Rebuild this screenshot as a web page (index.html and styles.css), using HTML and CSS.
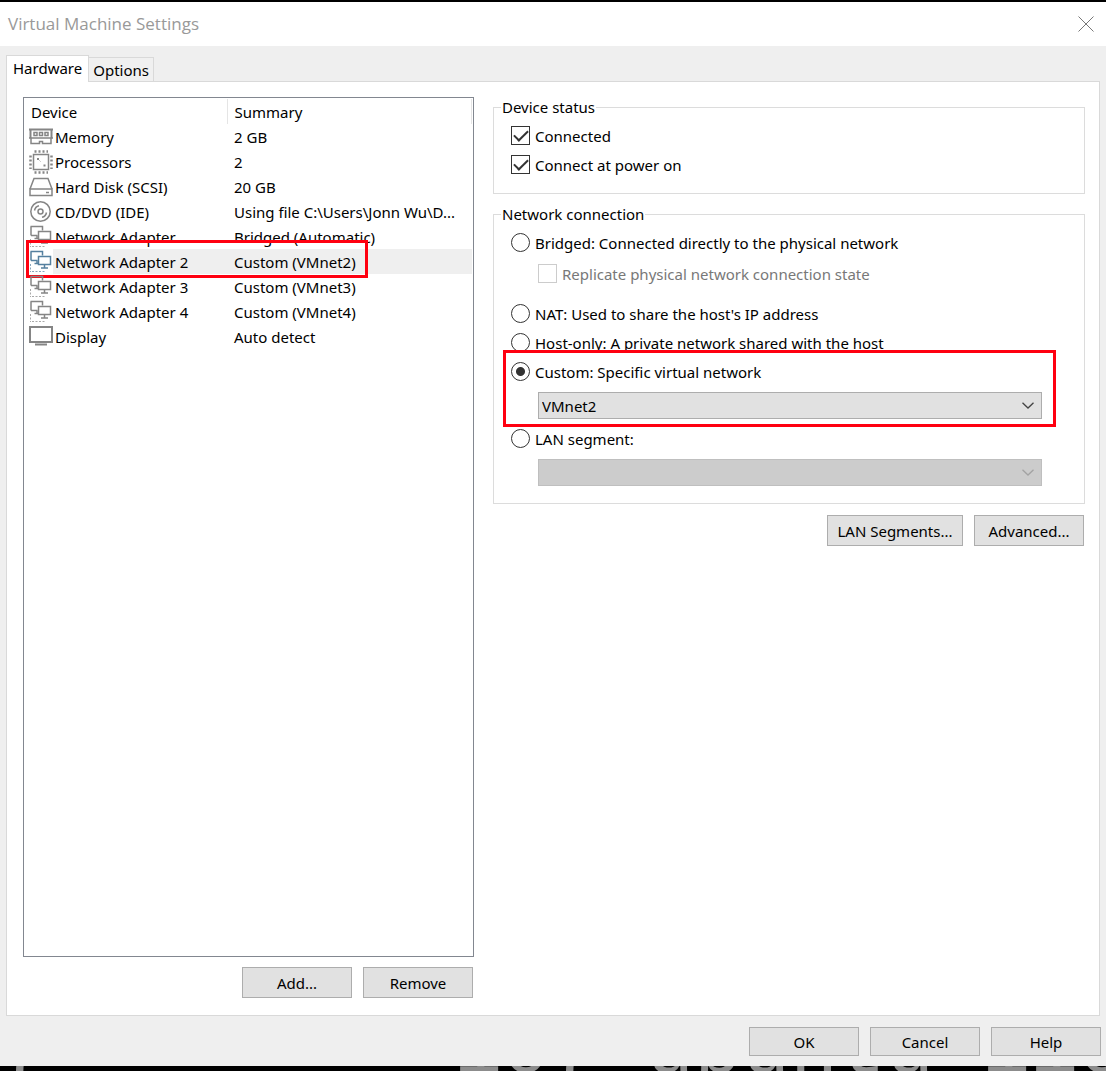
FILE: index.html
```html
<!DOCTYPE html>
<html lang="en">
<head>
<meta charset="utf-8">
<title>Virtual Machine Settings</title>
<link rel="stylesheet" href="styles.css">
</head>
<body>
<svg class="defs" aria-hidden="true">
  <symbol id="i-net" viewBox="0 0 24 24">
    <g fill="none" stroke="currentColor">
      <path d="M8.500 10.500H2M1.500 1.500H13.500V5.500M2 1.500V10.500" stroke-width="1.500"/>
      <path d="M5.500 13.500H9.500M8 10.500V13.500" stroke-width="1.500"/>
      <rect x="9.500" y="6.500" width="12" height="8" stroke-width="1.500" fill="none"/>
      <path d="M15.500 15V17.500M12 18H19" stroke-width="1.500"/>
      <path d="M1.500 14V22M3 21.500H16" stroke-dasharray="2 1.500" opacity=".7"/>
    </g>
  </symbol>
</svg>
<div class="dialog">
  <header class="titlebar">
    <h1>Virtual Machine Settings</h1>
    <button class="close" type="button" aria-label="Close"><svg width="16" height="16" viewBox="0 0 16 16"><path d="M.5.5l15 15M15.500.5l-15 15" stroke="#777" fill="none"/></svg></button>
  </header>
  <nav class="tabs">
    <button type="button" class="tab active">Hardware</button>
    <button type="button" class="tab">Options</button>
  </nav>
  <main class="panel">
    <section class="devices">
      <div class="list">
        <table>
          <thead><tr><th>Device</th><th>Summary</th></tr></thead>
          <tbody>
            <tr><td><span class="dev"><svg class="icon" viewBox="0 0 24 24"><g fill="none" stroke="currentColor"><path d="M0 4.500H24M1.500 4V13M22.500 4V13" stroke-width="2"/><path d="M0 13H24" stroke-width="1.500"/><path d="M2 13V18.500H10.500V16.500H13.500V18.500H22V13" stroke-width="1.500"/><path d="M5 7.500h3v3H5zM10.500 7.500h3v3h-3zM16 7.500h3v3h-3z" stroke-width="1.500"/></g></svg>Memory</span></td><td>2 GB</td></tr>
            <tr><td><span class="dev"><svg class="icon" viewBox="0 0 24 24"><g fill="none" stroke="currentColor"><rect x="4.500" y="4.500" width="15" height="15" stroke-width="1.500"/><path d="M5.500 1.500H19M5.500 22.500H19M1.500 5.500V19M22.500 5.500V19" stroke-width="2.500" stroke-dasharray="2 2"/><path d="M8 8h2v2H8zM14.500 14.500h2v2h-2z" fill="currentColor" stroke="none"/><path d="M10 10l2 2" opacity=".4"/></g></svg>Processors</span></td><td>2</td></tr>
            <tr><td><span class="dev"><svg class="icon" viewBox="0 0 24 24"><g fill="none" stroke="currentColor" stroke-width="1.500"><path d="M1 14L5 3.500H19L23 14"/><rect x="1" y="14" width="22" height="6.500"/><path d="M17 17.500h3"/></g></svg>Hard Disk (SCSI)</span></td><td>20 GB</td></tr>
            <tr><td><span class="dev"><svg class="icon" viewBox="0 0 24 24"><g fill="none" stroke="currentColor" stroke-width="1.500"><circle cx="11.500" cy="11.500" r="9.700"/><circle cx="11.500" cy="11.500" r="2.500"/><path d="M5.500 10.500A6 6 0 0 1 10 5.700M17.500 12.500A6 6 0 0 1 13 17.300"/></g></svg>CD/DVD (IDE)</span></td><td>Using file C:\Users\Jonn Wu\D...</td></tr>
            <tr><td><span class="dev"><svg class="icon" viewBox="0 0 24 24"><use href="#i-net"/></svg>Network Adapter</span></td><td>Bridged (Automatic)</td></tr>
            <tr class="selected"><td><span class="dev"><svg class="icon" viewBox="0 0 24 24"><use href="#i-net"/></svg>Network Adapter 2</span><span class="mark mark-row"></span></td><td>Custom (VMnet2)</td></tr>
            <tr><td><span class="dev"><svg class="icon" viewBox="0 0 24 24"><use href="#i-net"/></svg>Network Adapter 3</span></td><td>Custom (VMnet3)</td></tr>
            <tr><td><span class="dev"><svg class="icon" viewBox="0 0 24 24"><use href="#i-net"/></svg>Network Adapter 4</span></td><td>Custom (VMnet4)</td></tr>
            <tr><td><span class="dev"><svg class="icon" viewBox="0 0 24 24"><g fill="none" stroke="currentColor" stroke-width="2"><rect x="1" y="2" width="22" height="15"/><path d="M6 19.500H18"/></g></svg>Display</span></td><td>Auto detect</td></tr>
          </tbody>
        </table>
      </div>
      <div class="actions">
        <button type="button" class="btn">Add...</button>
        <button type="button" class="btn">Remove</button>
      </div>
    </section>
    <section class="settings">
      <fieldset class="status">
        <legend>Device status</legend>
        <label class="opt"><input type="checkbox" checked>Connected</label>
        <label class="opt"><input type="checkbox" checked>Connect at power on</label>
      </fieldset>
      <fieldset class="network">
        <legend>Network connection</legend>
        <label class="opt"><input type="radio" name="net">Bridged: Connected directly to the physical network</label>
        <label class="opt sub"><input type="checkbox" disabled>Replicate physical network connection state</label>
        <label class="opt"><input type="radio" name="net">NAT: Used to share the host's IP address</label>
        <label class="opt"><input type="radio" name="net">Host-only: A private network shared with the host</label>
        <div class="custom">
          <label class="opt"><input type="radio" name="net" checked>Custom: Specific virtual network</label>
          <div class="select"><select aria-label="Virtual network"><option>VMnet2</option></select><svg width="12" height="7" viewBox="0 0 12 7"><path d="M.5.7L6 6 11.500.7" fill="none" stroke="currentColor" stroke-width="1.300"/></svg></div>
          <span class="mark mark-custom"></span>
        </div>
        <label class="opt"><input type="radio" name="net">LAN segment:</label>
        <div class="select disabled"><select aria-label="LAN segment" disabled><option></option></select><svg width="12" height="7" viewBox="0 0 12 7"><path d="M.5.7L6 6 11.500.7" fill="none" stroke="currentColor" stroke-width="1.300"/></svg></div>
      </fieldset>
      <div class="actions">
        <button type="button" class="btn wide">LAN Segments...</button>
        <button type="button" class="btn">Advanced...</button>
      </div>
    </section>
  </main>
  <footer class="footer">
    <button type="button" class="btn">OK</button>
    <button type="button" class="btn">Cancel</button>
    <button type="button" class="btn">Help</button>
  </footer>
</div>
<div class="console"><span>7</span><span>107 ubuntu 110</span></div>
</body>
</html>
```
FILE: styles.css
```css
* { box-sizing: border-box; }
body {
  margin: 0;
  min-height: 100vh;
  display: flex;
  flex-direction: column;
  background: #000;
  color: #000;
  font: 15px/24px "Noto Sans", "Open Sans", sans-serif;
}
button, select, input { font: inherit; color: inherit; margin: 0; }
.defs { position: absolute; width: 0; height: 0; }
.dialog {
  flex: 1;
  display: flex;
  flex-direction: column;
  background: #efefef;
  border-top: 2px solid #000;
}
.titlebar {
  height: 44px;
  padding: 0 12px 0 8px;
  display: flex;
  align-items: center;
  justify-content: space-between;
  background: #fff;
}
.titlebar h1 { margin: 0; font-family: "Open Sans", sans-serif; font-size: 17px; font-weight: 400; color: #999; }
.close { display: flex; padding: 0; border: 0; background: none; }
.tabs { position: relative; display: flex; align-items: flex-end; padding: 9px 7px 0 6px; }
.tab {
  height: 24px;
  padding: 0 4px;
  border: 1px solid #d9d9d9;
  border-width: 1px 1px 0 0;
  background: #f0f0f0;
}
.tab.active {
  height: 27px;
  padding: 0 6px 2px;
  border-left-width: 1px;
  background: #fff;
  margin-bottom: -1px;
}
.panel {
  flex: 1;
  display: grid;
  grid-template-columns: 451fr 592fr;
  gap: 19px;
  margin: 0 6px;
  padding: 15px 14px 17px 16px;
  background: #fff;
  border: 1px solid #d9d9d9;
}
.devices { display: flex; flex-direction: column; gap: 10px; min-width: 0; }
.list { flex: 1; border: 1px solid #828790; padding: 1px; }
table { width: 100%; border-collapse: collapse; table-layout: fixed; }
th, td { height: 25px; padding: 0 0 0 7px; text-align: left; font-weight: 400; white-space: nowrap; line-height: 24px; }
th { border-right: 1px solid #e5e5e5; }
th:first-child { width: 202px; padding-left: 6px; }
td:first-child { position: relative; padding-left: 4px; }
.dev { display: flex; align-items: center; gap: 2px; }
.icon { width: 24px; height: 24px; color: #858585; }
.selected { background: linear-gradient(90deg, #fff 28px, #efefef 28px); }
.selected .icon { color: #55809f; }
.mark { position: absolute; border: 3px solid #ff0010; pointer-events: none; }
.mark-row { inset: -9px -141px -4px 1px; }
.actions { display: flex; justify-content: flex-end; gap: 11px; padding-right: 1px; }
.btn {
  width: 110px;
  height: 31px;
  padding: 0;
  border: 1px solid #adadad;
  background: #e1e1e1;
}
.btn.wide { width: 136px; }
.settings { min-width: 0; }
fieldset { margin: 0; padding: 4px 42px 0 17px; border: 1px solid #dcdcdc; min-width: 0; }
legend { margin-left: -10px; padding: 0 1px; line-height: 20px; }
.status { padding-bottom: 14px; margin-bottom: 10px; }
.network { padding-bottom: 12px; margin-bottom: 11px; }
.opt { display: flex; align-items: center; gap: 5px; height: 29px; }
.opt.sub { margin-left: 27px; height: 42px; padding-bottom: 9px; color: #787878; }
.opt input {
  appearance: none;
  flex: none;
  width: 19px;
  height: 19px;
  border: 1px solid #333;
  background: #fff;
}
.opt input[type="radio"] { border-radius: 50%; }
.opt input[type="radio"]:checked { background: radial-gradient(circle, #333 4px, #fff 5px); }
.opt input[type="checkbox"] { display: grid; place-items: center; }
.opt input[type="checkbox"]:checked::after {
  content: "";
  width: 12px;
  height: 6px;
  margin-top: -4px;
  border: solid #333;
  border-width: 0 0 2px 2px;
  transform: rotate(-45deg);
}
.opt input:disabled { border-color: #ccc; }
.custom { position: relative; }
.mark-custom { inset: -7px -14px -8px -8px; }
.select { position: relative; margin: 6px 0 5px 27px; height: 27px; }
.select select {
  appearance: none;
  display: block;
  width: 100%;
  height: 27px;
  padding: 0 3px;
  border: 1px solid #adadad;
  border-radius: 0;
  background: #e1e1e1;
  opacity: 1;
}
.select svg { position: absolute; right: 8px; top: 10px; color: #444; pointer-events: none; }
.select.disabled select { background: #ccc; border-color: #bfbfbf; }
.select.disabled svg { color: #a3a3a3; }
.footer { display: flex; justify-content: flex-end; gap: 11px; padding: 11px 5px 10px; }
.footer .btn { height: 29px; }
.console {
  height: 5px;
  display: flex;
  align-items: flex-end;
  gap: 406px;
  overflow: hidden;
  background: #000;
  color: #8c8c8c;
  font: 80px/40px "Liberation Mono", monospace;
  white-space: pre;
}
```
